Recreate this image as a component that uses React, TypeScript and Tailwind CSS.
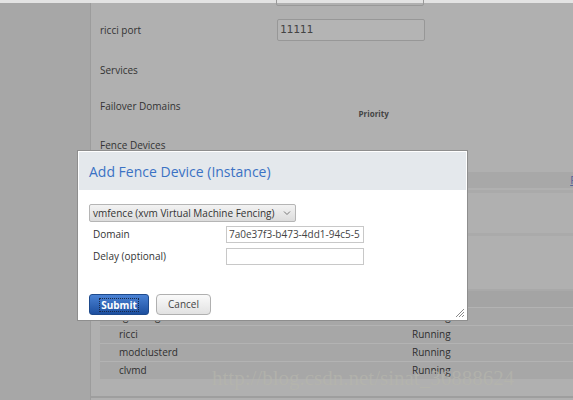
import { FC } from "react";

const rows = [
  { name: "rgmanager", status: "Running" },
  { name: "ricci", status: "Running" },
  { name: "modclusterd", status: "Running" },
  { name: "clvmd", status: "Running" },
];

const ResizeGrip: FC = () => (
  <svg width="10" height="10" viewBox="0 0 10 10" className="absolute right-[2px] bottom-[2px]">
    <path d="M9 1 L1 9 M9 4 L4 9 M9 7 L7 9" stroke="#8a8a8a" strokeWidth="1" />
  </svg>
);

const App: FC = () => {
  return (
    <div className="relative w-[573px] h-[400px] overflow-hidden bg-[#b0b0b0] text-[10px] text-[#333] font-['Open_Sans',sans-serif]">
      <div className="h-[3px] bg-[#e3e3e3]" />
      <div className="flex h-[397px]">
        <div className="w-[91px] shrink-0 bg-[#a7a7a7] border-r border-[#9c9c9c]" />
        <div className="flex-1 flex flex-col h-[395px] border-b-2 border-[#9e9e9e]">
          {/* cut-off field above */}
          <div className="h-[16px] relative">
            <div className="absolute left-[185px] top-[-14px] w-[148px] h-[17px] border border-[#999] rounded-[2px]" />
          </div>
          <div className="flex items-center h-[22px] pl-[9px]">
            <span className="w-[177px]">ricci port</span>
            <div className="w-[148px] h-[22px] border border-[#979797] rounded-[2px] bg-[#b4b4b4] flex items-center px-[2px] font-['DejaVu_Sans_Mono',monospace] text-[11px] text-[#444]">
              11111
            </div>
          </div>
          <div className="pl-[9px] h-[14px] leading-[14px] mt-[22px]">Services</div>
          <div className="flex pl-[9px] h-[22px] mt-[22px]">
            <span className="leading-[14px]">Failover Domains</span>
            <span className="ml-[178px] mt-[8px] text-[8px] font-bold text-[#444] leading-[14px]">Priority</span>
          </div>
          <div className="pl-[9px] h-[14px] leading-[14px] mt-[17px]">Fence Devices</div>
          <div className="ml-[9px] h-[16px] mt-[20px] bg-[#a8a8a8] flex justify-end">
            <span className="text-[#56609a] underline text-[11px] leading-[16px] mr-[-4px]">R</span>
          </div>
          <div className="ml-[9px] h-[3px] mt-[2px] bg-[#aaaaaa]" />
          <div className="ml-[9px] h-[3px] mt-[40px] bg-[#aaaaaa]" />
          <div className="ml-[9px] mt-[53px] border-t-2 border-[#a9a9a9] bg-[#a7a7a7] flex flex-col">
            <div className="h-[16px] bg-[#a4a4a4]" />
            {rows.map((r) => (
              <div key={r.name} className="flex items-center h-[18px] border-t border-[#b3b3b3] pl-[19px] text-[#2f2f2f]">
                <span className="w-[293px]">{r.name}</span>
                <span>{r.status}</span>
              </div>
            ))}
          </div>
        </div>
      </div>

      {/* watermark */}
      <div className="absolute left-[212px] top-[366px] font-['Liberation_Serif',serif] text-[21px] leading-[24px] text-[#b6b6ad] opacity-70 pointer-events-none whitespace-nowrap">
        http://blog.csdn.net/sinat_36888624
      </div>

      {/* modal */}
      <div className="absolute left-[77px] top-[150px] w-[391px] h-[171px] bg-white border border-[#8e8e8e] p-[1px]">
        <div className="h-[38px] bg-[#e4e8ec] flex items-center pl-[10px]">
          <span className="text-[14px] text-[#3b72c4]">Add Fence Device (Instance)</span>
        </div>
        <div className="pl-[10px] pt-[14px]">
          <div className="w-[207px] h-[18px] border border-[#b5b5b5] rounded-[2px] bg-gradient-to-b from-[#f3f3f3] to-[#dcdcdc] flex items-center justify-between pl-[3px] pr-[4px]">
            <span className="text-[#333] whitespace-nowrap text-[10px]">vmfence (xvm Virtual Machine Fencing)</span>
            <svg width="8" height="6" viewBox="0 0 8 6">
              <path d="M1 1.5 L4 4.5 L7 1.5" stroke="#777" strokeWidth="1" fill="none" />
            </svg>
          </div>
          <div className="flex items-center h-[17px] mt-[4px]">
            <span className="w-[137px] pl-[4px]">Domain</span>
            <div className="w-[138px] h-[17px] border border-[#c8c8c8] flex items-center pl-[2px] overflow-hidden whitespace-nowrap text-[#444]">
              7a0e37f3-b473-4dd1-94c5-5
            </div>
          </div>
          <div className="flex items-center h-[17px] mt-[5px]">
            <span className="w-[137px] pl-[4px]">Delay (optional)</span>
            <div className="w-[138px] h-[17px] border border-[#c8c8c8]" />
          </div>
          <div className="flex gap-[7px] mt-[29px]">
            <button className="w-[60px] h-[21px] rounded-[3px] border border-[#1e4a8c] bg-gradient-to-b from-[#4a82d4] to-[#1d4f9f] text-white font-bold text-[10px] flex items-center justify-center">
              <span className="outline-1 outline-dotted outline-[#1a2a4a] px-[1px] leading-[12px]">Submit</span>
            </button>
            <button className="w-[55px] h-[21px] rounded-[4px] border border-[#b0b0b0] bg-gradient-to-b from-[#fafafa] to-[#e2e2e2] text-[#444] text-[10px]">
              Cancel
            </button>
          </div>
        </div>
        <ResizeGrip />
      </div>
    </div>
  );
};

export default App;
